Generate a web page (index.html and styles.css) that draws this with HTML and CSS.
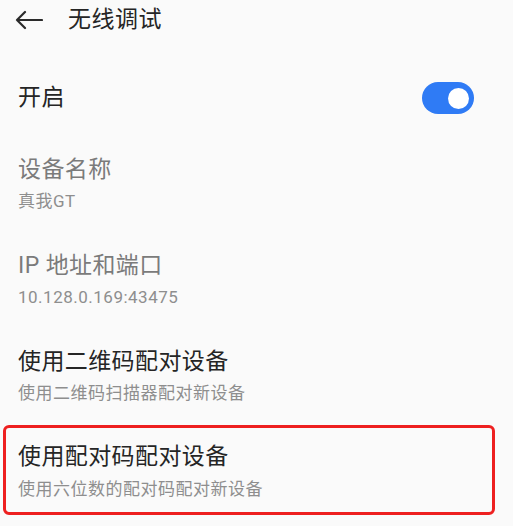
FILE: index.html
```html
<!DOCTYPE html>
<html lang="zh-CN">
<head>
<meta charset="utf-8">
<title>无线调试</title>
<link rel="stylesheet" href="styles.css">
</head>
<body>
<div class="page">
  <header class="header">
    <svg class="back" width="28" height="20" viewBox="0 0 28 20" aria-hidden="true">
      <path d="M2 10H27M2 10L10 2M2 10L10 18" fill="none" stroke="#2a2a2a" stroke-width="2.2" stroke-linecap="round" stroke-linejoin="round"/>
    </svg>
    <h1 class="title">无线调试</h1>
  </header>

  <div class="switch-row">
    <span class="row-title">开启</span>
    <span class="toggle"><span class="knob"></span></span>
  </div>

  <div class="item">
    <div class="item-title muted">设备名称</div>
    <div class="item-sub">真我GT</div>
  </div>

  <div class="item">
    <div class="item-title muted">IP 地址和端口</div>
    <div class="item-sub">10.128.0.169:43475</div>
  </div>

  <div class="item">
    <div class="item-title">使用二维码配对设备</div>
    <div class="item-sub">使用二维码扫描器配对新设备</div>
  </div>

  <div class="item item-boxed">
    <div class="item-title">使用配对码配对设备</div>
    <div class="item-sub">使用六位数的配对码配对新设备</div>
  </div>
</div>
</body>
</html>
```

FILE: styles.css
```css
* {
  box-sizing: border-box;
}

html, body {
  margin: 0;
  padding: 0;
  background: #fafafa;
}

body {
  font-family: Roboto, "Noto Sans CJK SC", "Noto Sans", sans-serif;
  color: #222222;
}

.page {
  width: 513px;
  height: 526px;
  overflow: hidden;
}

.header {
  height: 40px;
  display: flex;
  align-items: center;
  padding-left: 15px;
}

.back {
  display: block;
  flex: none;
}

.title {
  margin: 0 0 0 25px;
  font-size: 23px;
  line-height: 30px;
  font-weight: 400;
  letter-spacing: 0.5px;
  color: #252525;
}

.switch-row {
  display: flex;
  align-items: center;
  justify-content: space-between;
  padding: 42px 39px 22px 18px;
}

.row-title {
  font-size: 23px;
  line-height: 30px;
  letter-spacing: 0.4px;
  color: #252525;
}

.toggle {
  width: 52px;
  height: 32px;
  border-radius: 16px;
  background: #2f7bf5;
  display: flex;
  align-items: center;
  justify-content: flex-end;
  padding-right: 5px;
}

.knob {
  width: 21px;
  height: 21px;
  border-radius: 50%;
  background: #ffffff;
}

.item {
  padding: 19px 18px 20px;
}

.item-title {
  font-size: 23px;
  line-height: 30px;
  letter-spacing: 0.4px;
  color: #252525;
}

.item-title.muted {
  color: #7b7b7b;
}

.item-sub {
  margin-top: 5px;
  font-size: 17px;
  line-height: 22px;
  letter-spacing: 0.5px;
  color: #8e8e8e;
}

.item-boxed {
  margin: 1px 18px 0 3px;
  padding: 14px 12px 12px;
  border: 3px solid #ee2020;
  border-radius: 6px;
}

.item-boxed .item-sub {
  margin-top: 6px;
}
```
